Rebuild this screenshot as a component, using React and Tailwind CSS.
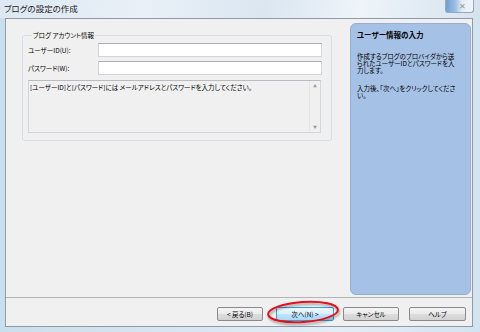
import React from "react";

const jp = "font-['Noto_Sans_CJK_JP','Liberation_Sans',sans-serif] [font-feature-settings:'palt']";

function Button({ children, primary, w }) {
  return (
    <div
      className={`flex h-[14px] items-center justify-center rounded-[2px] border text-[6.5px] leading-none text-black ${w} ${
        primary
          ? "border-[#3c9fd0] bg-[linear-gradient(#eef8fe_0%,#d9f0fc_50%,#bee6fd_51%,#a7d9f5_100%)]"
          : "border-[#8a8a8a] bg-[linear-gradient(#f4f4f4_0%,#ebebeb_50%,#dddddd_51%,#d2d2d2_100%)]"
      }`}
    >
      {children}
    </div>
  );
}

export default function App() {
  return (
    <div className={`relative h-[332px] w-[480px] overflow-hidden bg-[linear-gradient(90deg,#c9dfee_0%,#d8e6f1_40%,#e4edf5_70%,#d3e3f0_100%)] ${jp}`}>
      {/* Title bar */}
      <div className="flex h-[18px] items-start bg-[linear-gradient(100deg,#dde8f2_0%,#e9f0f7_30%,#dbe6f1_55%,#eef4f9_75%,#d6e3ef_100%)]">
        <span className="ml-[4px] mt-[3px] text-[8.5px] leading-[11px] text-[#1b1b1b]">ブログの設定の作成</span>
        <div className="ml-auto mr-[6px] flex h-[13px] w-[29px] items-center justify-end rounded-b-[3px] border border-t-0 border-[#98a9bd] bg-[linear-gradient(90deg,#6f9fd3_0%,#9dbfe3_35%,#e6edf5_60%,#f2f5f8_100%)] pr-[7px] text-[8px] leading-none text-[#8d98a6]">
          ✕
        </div>
      </div>

      {/* Client area */}
      <div className="ml-[5px] flex h-[309px] w-[468px] flex-col border border-[#8f9aa6] bg-[#f0f0f0]">
        <div className="flex h-[278px]">
          {/* Left: group box */}
          <fieldset className="ml-[16px] mt-[12px] h-[110px] w-[310px] rounded-[3px] border border-[#d5dfe5] pb-[5px] pl-[5px] pr-[8px] pt-[3px]">
            <legend className="ml-[4px] px-[1px] text-[6.5px] leading-[9px] text-black">ブログ アカウント情報</legend>
            <div className="flex h-[14px] items-center">
              <span className="w-[70px] text-[6.5px] leading-none text-black">ユーザーID(U):</span>
              <div className="h-[14px] w-[224px] border border-[#cdd5df] border-t-[#abadb3] bg-white" />
            </div>
            <div className="mt-[4px] flex h-[14px] items-center">
              <span className="w-[70px] text-[6.5px] leading-none text-black">パスワード(W):</span>
              <div className="h-[14px] w-[224px] border border-[#cdd5df] border-t-[#abadb3] bg-white" />
            </div>
            <div className="mt-[5px] flex h-[53px] w-[293px] border border-[#d3d7dc] border-t-[#b8bcc2] bg-[#f0f0f0]">
              <p className="flex-1 pl-[1px] pt-[2px] text-[6.5px] leading-[8px] text-black">
                [ユーザーID]と[パスワード]には メールアドレスとパスワードを入力してください。
              </p>
              <div className="flex w-[11px] flex-col items-center justify-between border-l border-[#e6e6e6] py-[3px] text-[4px] leading-none text-[#9a9a9a]">
                <span>▲</span>
                <span>▼</span>
              </div>
            </div>
          </fieldset>

          {/* Right: info panel */}
          <div className="ml-auto mr-[1px] mt-[4px] h-[272px] w-[121px] rounded-[6px] border border-[#93afd6] bg-[#a5c1e6] px-[6px] pt-[6px]">
            <p className="text-[7.5px] font-bold leading-[10px] text-black">ユーザー情報の入力</p>
            <p className="mt-[13px] whitespace-nowrap text-[6.5px] leading-[7px] text-black">
              作成するブログのプロバイダから送
              <br />
              られたユーザーIDとパスワードを入
              <br />
              力します。
            </p>
            <p className="mt-[11px] whitespace-nowrap text-[6.5px] leading-[7px] text-black">
              入力後、「次へ」をクリックしてくださ
              <br />
              い。
            </p>
          </div>
        </div>

        {/* Separator */}
        <div className="border-t border-[#b4b4b4]" />

        {/* Buttons */}
        <div className="flex justify-end pr-[6px] pt-[9px]">
          <Button w="w-[46px]">&lt; 戻る(B)</Button>
          <div className="ml-[13px]">
            <Button primary w="w-[58px]">次へ(N) &gt;</Button>
          </div>
          <div className="ml-[9px]">
            <Button w="w-[56px]">キャンセル</Button>
          </div>
          <div className="ml-[10px]">
            <Button w="w-[57px]">ヘルプ</Button>
          </div>
        </div>
      </div>

      {/* Red annotation ellipse */}
      <svg
        className="pointer-events-none absolute left-[264px] top-[299px] h-[28px] w-[80px] [filter:drop-shadow(1px_2px_1px_rgba(0,0,0,0.35))]"
        viewBox="0 0 80 28"
      >
        <ellipse cx="39" cy="13" rx="35" ry="10" transform="rotate(-4 39 13)" fill="none" stroke="#e3101c" strokeWidth="2" />
      </svg>
    </div>
  );
}
